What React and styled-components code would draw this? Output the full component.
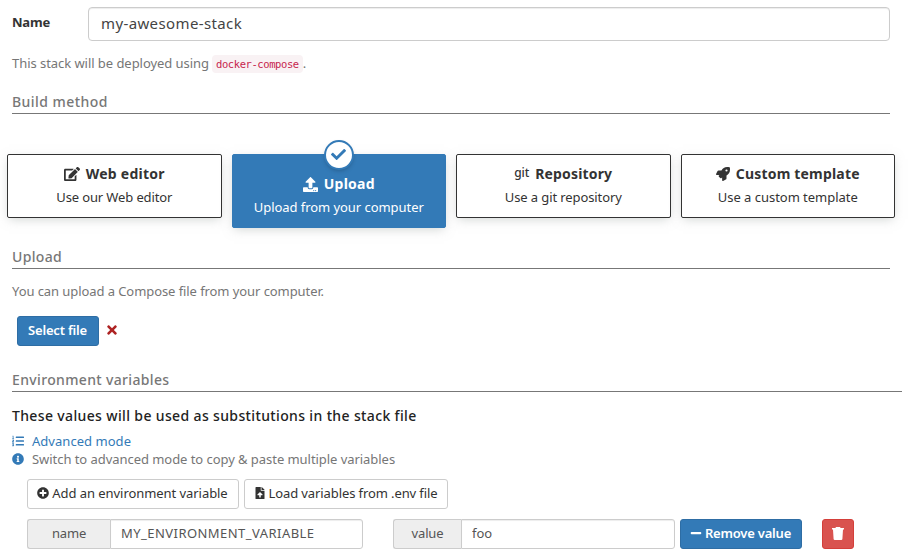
import React from 'react';
import styled, { createGlobalStyle, css } from 'styled-components';
import {
  FaCheck, FaEdit, FaFileUpload, FaInfoCircle, FaListOl, FaMinus,
  FaPlusCircle, FaRocket, FaTimes, FaUpload,
} from 'react-icons/fa';

const GlobalStyle = createGlobalStyle`
  * { box-sizing: border-box; }
  body {
    margin: 0;
    background: #fff;
    color: #333;
    font: 13px/18px "Noto Sans", sans-serif;
  }
  svg { display: block; flex: none; }
`;

const Page = styled.form`
  width: 910px;
  height: 560px;
  overflow: hidden;
  padding-top: 7px;
`;

const Text = styled.span`
  letter-spacing: ${(p) => p.$track || 0}px;
  white-space: nowrap;
`;

const NameRow = styled.div`
  display: flex;
  padding: 0 20px 0 12px;
`;

const NameLabel = styled.label`
  width: 76px;
  padding-top: 6px;
  font-weight: 700;
  letter-spacing: -0.2px;
`;

const control = css`
  min-width: 0;
  border: 1px solid #ccc;
  box-shadow: inset 0 1px 1px rgba(0, 0, 0, 0.075);
  background: #fff;
  color: #555;
  font-family: inherit;
  outline: none;
`;

const NameInput = styled.input`
  ${control}
  flex: 1;
  height: 34px;
  padding: 0 12px 2px;
  border-radius: 4px;
  font-size: 15px;
  letter-spacing: 0.38px;
  color: #444;
`;

const Hint = styled.p`
  display: flex;
  align-items: center;
  height: 18px;
  margin: ${(p) => p.$top}px 0 0 12px;
  color: #767676;
`;

const Code = styled.code`
  height: 18px;
  margin: 2px 0 0 3px;
  padding: 0 4px;
  border-radius: 4px;
  background: #f9f2f4;
  color: #c7254e;
  font: 10.5px/18px "DejaVu Sans Mono", monospace;
  letter-spacing: -0.41px;
`;

const SectionTitle = styled.h2`
  height: 23px;
  margin: ${(p) => p.$top}px ${(p) => p.$right || 20}px 0 12px;
  border-bottom: 1px solid #777;
  color: #777;
  font-size: 14px;
  font-weight: 500;
  line-height: 22px;
`;

const Methods = styled.div`
  display: grid;
  grid-template-columns: repeat(4, 1fr);
  gap: 10px;
  height: 74px;
  margin: 40px 15px 0 7px;
  align-items: start;
`;

const MethodCard = styled.div`
  position: relative;
  display: flex;
  flex-direction: column;
  align-items: center;
  height: ${(p) => (p.$active ? 74 : 64)}px;
  padding-top: ${(p) => (p.$active ? 19 : 9)}px;
  border: 1px solid ${(p) => (p.$active ? '#337ab7' : '#333')};
  border-radius: 2px;
  background: ${(p) => (p.$active ? '#337ab7' : '#fff')};
  color: ${(p) => (p.$active ? '#fff' : '#333')};
  box-shadow: 0 3px 10px -2px rgba(161, 170, 166, 0.5);
`;

const MethodTitle = styled.div`
  display: flex;
  align-items: center;
  gap: 6px;
  height: 20px;
  margin-bottom: 4px;
  font-size: 14px;
  font-weight: 700;
`;

const GitMark = styled.span`
  margin-top: -3px;
  font-size: 12px;
  font-weight: 500;
  letter-spacing: -0.1px;
`;

const CheckBadge = styled.div`
  position: absolute;
  top: -15px;
  left: 50%;
  display: flex;
  align-items: center;
  justify-content: center;
  width: 30px;
  height: 30px;
  padding-bottom: 1px;
  transform: translateX(-50%);
  border: 2px solid #337ab7;
  border-radius: 50%;
  background: #fff;
  color: #337ab7;
  box-shadow: 0 2px 5px -2px rgba(0, 0, 0, 0.3);
`;

const tones = {
  primary: css`background: #337ab7; border-color: #2e6da4; color: #fff; font-weight: 600;`,
  danger: css`background: #d9534f; border-color: #d43f3a; color: #fff;`,
  plain: css`background: #fff; border-color: #ccc; color: #333;`,
};

const Button = styled.button`
  display: flex;
  align-items: center;
  justify-content: center;
  gap: 3px;
  width: ${(p) => p.$width}px;
  height: 30px;
  padding: 0 1px 2px 0;
  border: 1px solid;
  border-radius: 3px;
  font-family: inherit;
  font-size: 13px;
  line-height: 18px;
  ${(p) => tones[p.$tone]}
`;

const FileRow = styled.div`
  display: flex;
  align-items: center;
  gap: 6px;
  margin: 16px 0 0 17px;
  color: #ae2323;
`;

const ClearIcon = styled(FaTimes)`
  margin-bottom: 2px;
`;

const Statement = styled.p`
  height: 20px;
  margin: 14px 0 6px 12px;
  color: #222;
  font-size: 14px;
  font-weight: 500;
  line-height: 20px;
`;

const IconLine = styled.div`
  display: flex;
  align-items: center;
  gap: 8px;
  height: 18px;
  margin-left: 12px;
  color: #337ab7;
`;

const Muted = styled(Text)`
  color: #767676;
`;

const Actions = styled.div`
  display: flex;
  gap: 5px;
  margin: 11px 0 0 27px;
`;

const VariableRow = styled.div`
  display: flex;
  margin: 10px 0 0 27px;
`;

const Field = styled.label`
  display: flex;
  width: ${(p) => p.$width}px;
  margin-right: ${(p) => p.$after}px;
`;

const Addon = styled.span`
  width: ${(p) => p.$width}px;
  height: 30px;
  border: 1px solid #ccc;
  border-right: 0;
  border-radius: 3px 0 0 3px;
  background: #eee;
  color: #555;
  line-height: 27px;
  text-align: center;
  letter-spacing: -0.15px;
`;

const FieldInput = styled.input`
  ${control}
  flex: 1;
  height: 30px;
  padding: 0 10px 2px;
  border-radius: 0 3px 3px 0;
  font-size: 13px;
  letter-spacing: ${(p) => p.$track}px;
`;

const DeleteSlot = styled.div`
  margin-left: 20px;
`;

const TrashIcon = () => (
  <svg width="12" height="13" viewBox="0 0 12 13" fill="currentColor">
    <path d="M4 0h4l.6 1H12v1.6H0V1h3.4zM1 2.5h10l-.6 9.4A1.2 1.2 0 0 1 9.2 13H2.8a1.2 1.2 0 0 1-1.2-1.1z" />
  </svg>
);

const methods = [
  { icon: <FaEdit size={16} />, title: 'Web editor', track: 0.24, text: 'Use our Web editor', textTrack: -0.125 },
  { icon: <FaUpload size={15} />, title: 'Upload', track: 0.23, text: 'Upload from your computer', textTrack: -0.053, active: true },
  { icon: <GitMark>git</GitMark>, title: 'Repository', track: 0.16, text: 'Use a git repository', textTrack: -0.1 },
  { icon: <FaRocket size={14} />, title: 'Custom template', track: 0.19, text: 'Use a custom template', textTrack: -0.03 },
];

export default function App() {
  return (
    <>
      <GlobalStyle />
      <Page>
        <NameRow>
          <NameLabel htmlFor="stack-name">Name</NameLabel>
          <NameInput id="stack-name" defaultValue="my-awesome-stack" />
        </NameRow>
        <Hint $top={13}>
          <Text $track={-0.05}>This stack will be deployed using</Text>
          <Code>docker-compose</Code>
          <Text>.</Text>
        </Hint>
        <SectionTitle $top={19}><Text $track={0.46}>Build method</Text></SectionTitle>
        <Methods>
          {methods.map((m) => (
            <MethodCard key={m.title} $active={m.active}>
              {m.active && <CheckBadge><FaCheck size={15} /></CheckBadge>}
              <MethodTitle>{m.icon}<Text $track={m.track}>{m.title}</Text></MethodTitle>
              <Text $track={m.textTrack}>{m.text}</Text>
            </MethodCard>
          ))}
        </Methods>
        <SectionTitle $top={18}><Text $track={0.35}>Upload</Text></SectionTitle>
        <Hint $top={13}>
          <Text $track={-0.077}>You can upload a Compose file from your computer.</Text>
        </Hint>
        <FileRow>
          <Button type="button" $tone="primary" $width={82}><Text $track={-0.18}>Select file</Text></Button>
          <ClearIcon size={14} />
        </FileRow>
        <SectionTitle $top={23} $right={8}><Text $track={0.35}>Environment variables</Text></SectionTitle>
        <Statement>
          <Text $track={0.36}>These values will be used as substitutions in the stack file</Text>
        </Statement>
        <IconLine><FaListOl size={12} /><Text $track={0.036}>Advanced mode</Text></IconLine>
        <IconLine>
          <FaInfoCircle size={12} />
          <Muted $track={-0.05}>Switch to advanced mode to copy &amp; paste multiple variables</Muted>
        </IconLine>
        <Actions>
          <Button type="button" $tone="plain" $width={212}>
            <FaPlusCircle size={12} /><Text $track={-0.06}>Add an environment variable</Text>
          </Button>
          <Button type="button" $tone="plain" $width={204}>
            <FaFileUpload size={12} /><Text $track={-0.1}>Load variables from .env file</Text>
          </Button>
        </Actions>
        <VariableRow>
          <Field $width={336} $after={30}>
            <Addon $width={83}>name</Addon>
            <FieldInput defaultValue="MY_ENVIRONMENT_VARIABLE" $track={0.45} />
          </Field>
          <Field $width={282} $after={5}>
            <Addon $width={68}>value</Addon>
            <FieldInput defaultValue="foo" $track={0} />
          </Field>
          <Button type="button" $tone="primary" $width={122}>
            <FaMinus size={12} /><Text $track={-0.21}>Remove value</Text>
          </Button>
          <DeleteSlot>
            <Button type="button" $tone="danger" $width={32} aria-label="Remove">
              <TrashIcon />
            </Button>
          </DeleteSlot>
        </VariableRow>
      </Page>
    </>
  );
}
